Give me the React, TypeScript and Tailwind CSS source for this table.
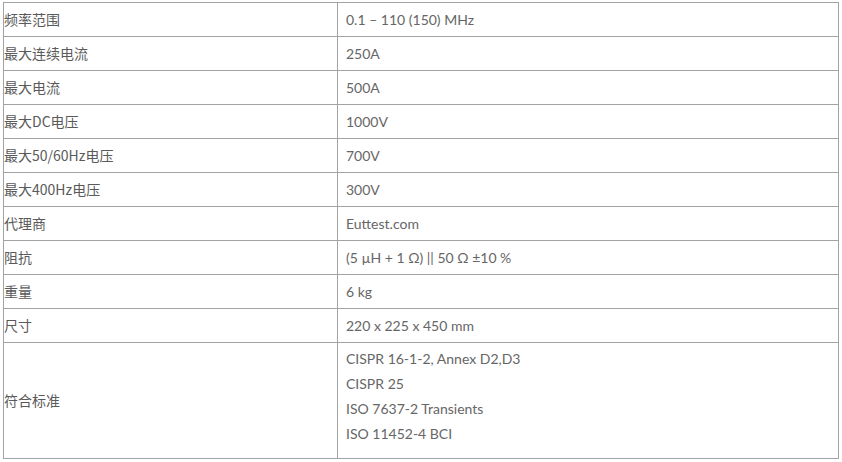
const specs: { label: string; value: string[] }[] = [
  { label: '频率范围', value: ['0.1 – 110 (150) MHz'] },
  { label: '最大连续电流', value: ['250A'] },
  { label: '最大电流', value: ['500A'] },
  { label: '最大DC电压', value: ['1000V'] },
  { label: '最大50/60Hz电压', value: ['700V'] },
  { label: '最大400Hz电压', value: ['300V'] },
  { label: '代理商', value: ['Euttest.com'] },
  { label: '阻抗', value: ['(5 µH + 1 Ω) || 50 Ω ±10 %'] },
  { label: '重量', value: ['6 kg'] },
  { label: '尺寸', value: ['220 x 225 x 450 mm'] },
  {
    label: '符合标准',
    value: ['CISPR 16-1-2, Annex D2,D3', 'CISPR 25', 'ISO 7637-2 Transients', 'ISO 11452-4 BCI'],
  },
];

const App = () => {
  return (
    <div className="w-[842px] h-[462px] bg-white pl-[3px] pt-[2px]">
      <table className="w-[836px] border-collapse border border-[#a3a3a3] table-fixed">
        <tbody>
          {specs.map((row) => (
            <tr key={row.label}>
              {/* label column */}
              <td className="w-[334px] h-[34px] border border-[#a3a3a3] p-0 align-middle text-[14px] text-[#5a5a5a] font-['Noto_Sans_CJK_SC',sans-serif]">
                {row.label}
              </td>
              <td className="border border-[#a3a3a3] pl-[8px] align-middle text-[14px] text-[#666] font-['Lato',sans-serif]">
                {row.value.length === 1 ? (
                  row.value[0]
                ) : (
                  <div className="pt-[3px] pb-[12px]">
                    {row.value.map((line) => (
                      <p key={line} className="leading-[25px]">
                        {line}
                      </p>
                    ))}
                  </div>
                )}
              </td>
            </tr>
          ))}
        </tbody>
      </table>
    </div>
  );
};

export default App;
